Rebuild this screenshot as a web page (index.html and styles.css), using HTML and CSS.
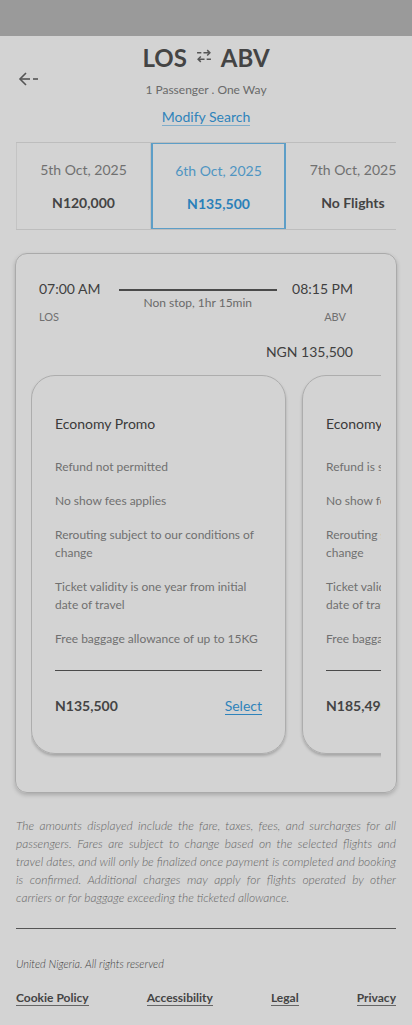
FILE: index.html
```html
<!DOCTYPE html>
<html lang="en">
<head>
    <meta charset="UTF-8">
    <meta name="viewport" content="width=device-width, initial-scale=1.0">
    <title>Select Flight</title>
    <link rel="stylesheet" href="styles.css">
</head>
<body>

    <!-- Status strip -->
    <div class="topbar"></div>

    <!-- Header -->
    <div class="header">
        <div class="back">
            <svg width="22" height="14" viewBox="0 0 22 14" fill="none" stroke="#555" stroke-width="1.6">
                <path d="M8 1 L2 7 L8 13" />
                <path d="M2 7 H12" />
                <path d="M15 7 H20" />
            </svg>
        </div>
        <div class="route">
            <h1 class="route-title">
                <span>LOS</span>
                <svg width="16" height="14" viewBox="0 0 15 13" fill="none" stroke="#555" stroke-width="1.4">
                    <path d="M1 3.5 H5 M7 3.5 H13" />
                    <path d="M10.5 1 L13 3.5 L10.5 6" />
                    <path d="M14 9.5 H10 M8 9.5 H2" />
                    <path d="M4.5 7 L2 9.5 L4.5 12" />
                </svg>
                <span>ABV</span>
            </h1>
            <div class="route-sub">1 Passenger . One Way</div>
            <a class="modify" href="#">Modify Search</a>
        </div>
        <div></div>
    </div>

    <!-- Date tabs -->
    <div class="dates">
        <div class="date-tab">
            <div class="date">5th Oct, 2025</div>
            <div class="price">N120,000</div>
        </div>
        <div class="date-tab active">
            <div class="date">6th Oct, 2025</div>
            <div class="price">N135,500</div>
        </div>
        <div class="date-tab">
            <div class="date">7th Oct, 2025</div>
            <div class="price">No Flights</div>
        </div>
    </div>

    <!-- Flight card -->
    <div class="flight">
        <div class="flight-info">
            <div class="leg">
                <div class="time">07:00 AM</div>
                <div class="code">LOS</div>
            </div>
            <div class="path">
                <div class="path-line"></div>
                <div class="path-label">Non stop, 1hr 15min</div>
            </div>
            <div class="leg leg-end">
                <div class="time">08:15 PM</div>
                <div class="code">ABV</div>
            </div>
        </div>
        <div class="total">NGN 135,500</div>

        <div class="fares">
            <div class="fare">
                <h3>Economy Promo</h3>
                <ul>
                    <li>Refund not permitted</li>
                    <li>No show fees applies</li>
                    <li>Rerouting subject to our conditions of change</li>
                    <li>Ticket validity is one year from initial date of travel</li>
                    <li>Free baggage allowance of up to 15KG</li>
                </ul>
                <div class="fare-foot">
                    <span class="fare-price">N135,500</span>
                    <a class="select" href="#">Select</a>
                </div>
            </div>
            <div class="fare">
                <h3>Economy Flex</h3>
                <ul>
                    <li>Refund is subject to charges</li>
                    <li>No show fees applies</li>
                    <li>Rerouting subject to our conditions of change</li>
                    <li>Ticket validity is one year from initial date of travel</li>
                    <li>Free baggage allowance of up to 23KG</li>
                </ul>
                <div class="fare-foot">
                    <span class="fare-price">N185,490</span>
                    <a class="select" href="#">Select</a>
                </div>
            </div>
        </div>
    </div>

    <p class="disclaimer">The amounts displayed include the fare, taxes, fees, and surcharges for all passengers. Fares are subject to change based on the selected flights and travel dates, and will only be finalized once payment is completed and booking is confirmed. Additional charges may apply for flights operated by other carriers or for baggage exceeding the ticketed allowance.</p>

    <!-- Footer -->
    <div class="footer">
        <div class="copy">United Nigeria. All rights reserved</div>
        <div class="links">
            <a href="#">Cookie Policy</a>
            <a href="#">Accessibility</a>
            <a href="#">Legal</a>
            <a href="#">Privacy</a>
        </div>
    </div>

</body>
</html>
```

FILE: styles.css
```css
body {
    font-family: Lato, "Open Sans", sans-serif;
    background-color: #d3d3d3;
    color: #444;
    margin: 0;
    padding: 0;
}
a { text-decoration: none; }

.topbar {
    height: 36px;
    background: #9a9a9a;
}

/* header */
.header {
    display: grid;
    grid-template-columns: 1fr auto 1fr;
    padding-top: 7px;
}
.back {
    padding: 29px 0 0 18px;
    line-height: 0;
}
.route {
    display: flex;
    flex-direction: column;
    align-items: center;
}
.route-title {
    display: flex;
    align-items: center;
    gap: 9px;
    margin: 0;
    font-size: 24px;
    line-height: 30px;
    font-weight: bold;
    color: #444;
}
.route-title svg { margin-top: -4px; }
.route-sub {
    margin-top: 9px;
    font-size: 12px;
    line-height: 16px;
    color: #6a6a6a;
}
.modify {
    margin-top: 10px;
    font-size: 14px;
    line-height: 17px;
    color: #2f83bb;
    border-bottom: 1px solid #7fadca;
}

/* dates */
.dates {
    display: flex;
    margin: 16px 16px 0;
    border-top: 1px solid #bdbdbd;
    border-bottom: 1px solid #bdbdbd;
    overflow: hidden;
}
.date-tab {
    flex: 0 0 135px;
    box-sizing: border-box;
    text-align: center;
    padding: 18px 0 15px;
    border-right: 1px solid #c4c4c4;
}
.date-tab:first-child { border-left: 1px solid #c4c4c4; }
.date-tab.active {
    border: 2px solid #5d9ec7;
    margin: -1px 0;
    padding: 18px 0 15px;
}
.date {
    font-size: 14px;
    line-height: 18px;
    color: #707070;
}
.price {
    margin-top: 15px;
    font-size: 14px;
    line-height: 18px;
    font-weight: bold;
    color: #444;
}
.active .date { color: #4f95c2; }
.active .price { color: #2a80b9; }

/* flight card */
.flight {
    margin: 23px 15px 0;
    border: 1px solid #aaa;
    border-radius: 12px;
    box-shadow: 0 2px 4px rgba(0, 0, 0, 0.2);
    padding: 25px 15px 34px;
}
.flight-info {
    display: flex;
    padding: 0 28px 0 8px;
}
.time {
    font-size: 14px;
    line-height: 20px;
    color: #3f3f3f;
}
.code {
    margin-top: 11px;
    font-size: 11px;
    line-height: 14px;
    color: #707070;
}
.leg-end { text-align: right; }
.leg-end .code { padding-right: 7px; }
.path {
    flex: 1;
    padding: 10px 15px 0 18px;
    text-align: center;
}
.path-line {
    height: 2px;
    background: #4a4a4a;
}
.path-label {
    margin-top: 5px;
    font-size: 12px;
    line-height: 14px;
    color: #6a6a6a;
}
.total {
    margin-top: 18px;
    padding-right: 28px;
    text-align: right;
    font-size: 14px;
    line-height: 20px;
    color: #3f3f3f;
}

.fares {
    display: flex;
    gap: 16px;
    margin-top: 13px;
    padding-bottom: 4px;
    overflow: hidden;
}
.fare {
    flex: 0 0 255px;
    box-sizing: border-box;
    height: 379px;
    border: 1px solid #adadad;
    border-radius: 24px;
    box-shadow: 0 2px 3px rgba(0, 0, 0, 0.22);
    padding: 38px 23px 0;
    display: flex;
    flex-direction: column;
}
.fare h3 {
    margin: 0;
    font-size: 14px;
    line-height: 20px;
    font-weight: normal;
    color: #3a3a3a;
}
.fare ul {
    list-style: none;
    margin: 24px 0 0;
    padding: 0;
    display: flex;
    flex-direction: column;
    gap: 16px;
    padding-bottom: 22px;
    border-bottom: 1px solid #4a4a4a;
}
.fare li {
    font-size: 12px;
    line-height: 18px;
    color: #707070;
}
.fare-foot {
    display: flex;
    justify-content: space-between;
    align-items: center;
    margin-top: 26px;
    white-space: nowrap;
}
.fare-price {
    font-size: 14px;
    line-height: 18px;
    font-weight: bold;
    color: #444;
}
.select {
    font-size: 14px;
    line-height: 17px;
    color: #2f83bb;
    border-bottom: 1px solid #2f83bb;
}

/* disclaimer + footer */
.disclaimer {
    margin: 24px 16px 0;
    padding-bottom: 21px;
    border-bottom: 1px solid #555;
    font-size: 12px;
    line-height: 18px;
    font-style: italic;
    font-weight: 300;
    text-align: justify;
    color: #666;
}
.footer { padding: 0 16px; }
.copy {
    margin-top: 28px;
    font-size: 11px;
    line-height: 14px;
    font-style: italic;
    font-weight: 300;
    color: #444;
}
.links {
    display: flex;
    justify-content: space-between;
    margin-top: 19px;
}
.links a {
    font-size: 12px;
    line-height: 15px;
    font-weight: bold;
    color: #444;
    border-bottom: 1px solid #666;
}
```
